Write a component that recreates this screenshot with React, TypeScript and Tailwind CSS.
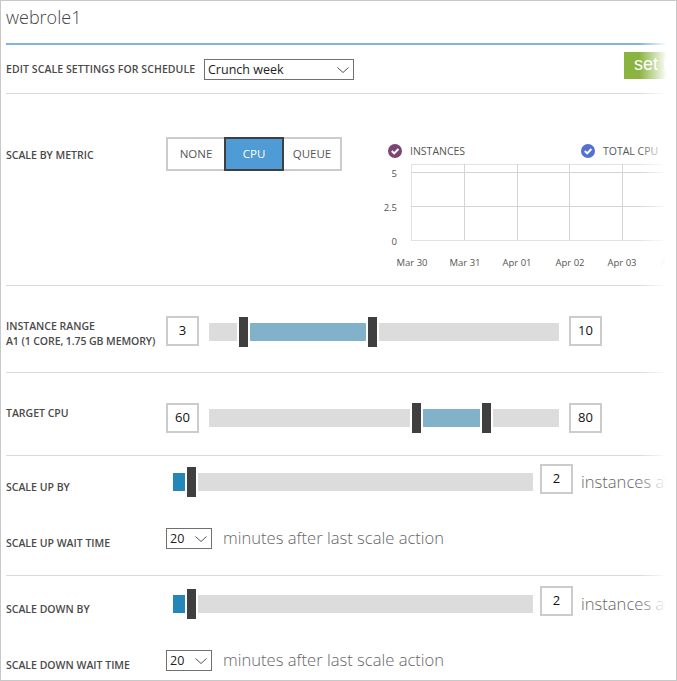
const font = "font-['Open_Sans',sans-serif]";

function Divider({ className = 'h-px bg-[#d9d9d9]' }: { className?: string }) {
  return <div className={`w-[659px] shrink-0 ${className}`} />;
}

function FieldLabel({ children, className = '' }: { children: React.ReactNode; className?: string }) {
  return (
    <div className={`w-[160px] shrink-0 text-[10.5px] font-semibold uppercase leading-[15px] text-[#4a4a4a] ${className}`}>
      {children}
    </div>
  );
}

function ValueBox({ value }: { value: string }) {
  return (
    <div className="flex h-[30px] w-[33px] shrink-0 items-center justify-center border-2 border-[#cccccc] bg-white text-[13px] text-[#111111]">
      {value}
    </div>
  );
}

function Handle() {
  return <div className="h-[30px] w-[9px] shrink-0 bg-[#3f3f3f]" />;
}

function Track({ width, tone }: { width: number; tone: 'gray' | 'range' | 'fill' }) {
  const colour = tone === 'gray' ? 'bg-[#dcdcdc]' : tone === 'range' ? 'bg-[#82b1ca]' : 'bg-[#2586b8]';
  return <div className={`h-[18px] shrink-0 ${colour}`} style={{ width }} />;
}

function RangeSlider({ a, b, c }: { a: number; b: number; c: number }) {
  return (
    <div className="flex items-center gap-[2px]">
      <Track width={a} tone="gray" />
      <Handle />
      <Track width={b} tone="range" />
      <Handle />
      <Track width={c} tone="gray" />
    </div>
  );
}

function Chevron() {
  return (
    <svg width="12" height="6" viewBox="0 0 12 6" className="shrink-0" fill="none">
      <path d="M0.5 0.5 L6 5.5 L11.5 0.5" stroke="#555" strokeWidth="1" />
    </svg>
  );
}

function Select({ value, className }: { value: string; className: string }) {
  return (
    <div className={`flex items-center justify-between border border-[#707070] bg-white pl-[3px] pr-[4px] text-[12.5px] text-[#222222] ${className}`}>
      <span className="pt-px">{value}</span>
      <Chevron />
    </div>
  );
}

function LegendCheck({ colour }: { colour: string }) {
  return (
    <svg width="14" height="14" viewBox="0 0 14 14" className="shrink-0">
      <circle cx="7" cy="7" r="7" fill={colour} />
      <path d="M3.8 7 L6.2 9.4 L10.4 5" fill="none" stroke="#fff" strokeWidth="2" />
    </svg>
  );
}

function Chart() {
  const xs = [464, 517, 569.5, 622];
  const dates: [number, string][] = [
    [412, 'Mar 30'],
    [465, 'Mar 31'],
    [517, 'Apr 01'],
    [570, 'Apr 02'],
    [622, 'Apr 03'],
  ];
  return (
    <svg width="290" height="110" viewBox="375 160 290 110" className="-ml-[10px] block" fontFamily="'Open Sans', sans-serif" fontSize="9.5" fill="#555">
      <rect x="411.5" y="164.5" width="270" height="76" fill="none" stroke="#e2e2e2" />
      <path d="M411 172.5 H665 M411 206.5 H665" stroke="#d4d4d4" />
      {xs.map((x) => (
        <path key={x} d={`M${Math.floor(x) + 0.5} 164 V240`} stroke="#d4d4d4" />
      ))}
      <text x="397" y="177" textAnchor="end">5</text>
      <text x="397" y="211" textAnchor="end">2.5</text>
      <text x="397" y="245" textAnchor="end">0</text>
      {dates.map(([x, label]) => (
        <text key={label} x={x} y="266" textAnchor="middle">{label}</text>
      ))}
      <text x="675" y="266" textAnchor="middle" fill="#ccc">Apr 04</text>
    </svg>
  );
}

function MetricButton({ label, active }: { label: string; active?: boolean }) {
  return (
    <div
      className={`flex h-[30px] items-center justify-center text-[11.5px] ${
        active ? 'z-10 -my-[2px] h-[34px] w-[60px] border-2 border-[#3f3f3f] bg-[#4e9bd6] text-white' : 'w-[56px] text-[#555555]'
      }`}
    >
      {label}
    </div>
  );
}

export default function App() {
  return (
    <div className={`relative box-border h-[681px] w-[677px] overflow-hidden border border-[#c8c8c8] bg-white pl-[5px] ${font}`}>
      <div className="h-[42px] pt-[2px] text-[18px] font-light leading-[28px] text-[#444444]">webrole1</div>
      <Divider className="h-[2px] bg-[#7fb5e0]" />

      <div className="relative flex h-[48px] items-center pt-px">
        <FieldLabel className="w-[198px] tracking-[0.08px]">Edit scale settings for schedule</FieldLabel>
        <Select value="Crunch week" className="h-[21px] w-[150px]" />
        <div className="absolute left-[618px] top-[7px] h-[27px] w-[60px] bg-[#8ab33f] pl-[10px] font-['Liberation_Sans',sans-serif] text-[18px] leading-[25px] text-white">
          set up
        </div>
      </div>
      <Divider />

      <div className="flex h-[191px] overflow-hidden">
        <div className="flex h-[77px] w-[379px] shrink-0 items-end">
          <FieldLabel className="mb-[8px]">Scale by metric</FieldLabel>
          <div className="flex h-[34px] w-[176px] shrink-0 items-center border-2 border-[#cccccc]">
            <MetricButton label="NONE" />
            <MetricButton label="CPU" active />
            <MetricButton label="QUEUE" />
          </div>
        </div>
        <div className="w-[280px] shrink-0 pt-[48px]">
          <div className="flex h-[18px] items-center text-[10.5px] text-[#555555]">
            <div className="ml-[3px] flex w-[193px] items-center gap-[8px]">
              <LegendCheck colour="#7c4674" />
              <span className="pt-px">INSTANCES</span>
            </div>
            <div className="flex items-center gap-[8px]">
              <LegendCheck colour="#5470d0" />
              <span className="pt-px">TOTAL CPU</span>
            </div>
          </div>
          <Chart />
        </div>
      </div>
      <Divider />

      <div className="flex h-[86px] pt-[30px]">
        <FieldLabel className="pt-[3px]">
          Instance range
          <br />
          <span className="tracking-[-0.08px]">A1 (1 core, 1.75 GB memory)</span>
        </FieldLabel>
        <ValueBox value="3" />
        <div className="ml-[10px] mr-[10px] pt-px">
          <RangeSlider a={28} b={116} c={180} />
        </div>
        <ValueBox value="10" />
      </div>
      <Divider />

      <div className="flex h-[82px] pt-[30px]">
        <FieldLabel className="pt-[3px]">Target CPU</FieldLabel>
        <ValueBox value="60" />
        <div className="ml-[10px] mr-[10px]">
          <RangeSlider a={201} b={57} c={66} />
        </div>
        <ValueBox value="80" />
      </div>
      <Divider />

      <ScaleGroup label="Scale up by" waitLabel="Scale up wait time" height={119} top="mt-[11px]" />
      <Divider />
      <ScaleGroup label="Scale down by" waitLabel="Scale down wait time" height={104} top="mt-[13px]" />

      <div className="pointer-events-none absolute inset-y-0 left-[638px] w-[28px] bg-gradient-to-r from-white/0 to-white" />
      <div className="pointer-events-none absolute inset-y-0 left-[665px] right-0 bg-white" />
    </div>
  );
}

function ScaleGroup({ label, waitLabel, height, top }: { label: string; waitLabel: string; height: number; top: string }) {
  return (
    <div className="flex flex-col overflow-hidden" style={{ height }}>
      <div className={`flex h-[30px] shrink-0 items-center ${top}`}>
        <FieldLabel className="self-start pt-[13px]">{label}</FieldLabel>
        <div className="ml-[7px] flex items-center gap-[2px]">
          <Track width={12} tone="fill" />
          <Handle />
          <Track width={335} tone="gray" />
        </div>
        <div className="ml-[7px] -translate-y-[3px]">
          <ValueBox value="2" />
        </div>
        <span className="ml-[8px] whitespace-nowrap text-[16.6px] font-light text-[#666666]">instances at a time</span>
      </div>
      <div className="mt-[31px] flex items-start">
        <FieldLabel className="pt-[8px]">{waitLabel}</FieldLabel>
        <Select value="20" className="h-[21px] w-[46px]" />
        <span className="ml-[11px] whitespace-nowrap text-[16.6px] font-light leading-[19px] text-[#666666]">minutes after last scale action</span>
      </div>
    </div>
  );
}
